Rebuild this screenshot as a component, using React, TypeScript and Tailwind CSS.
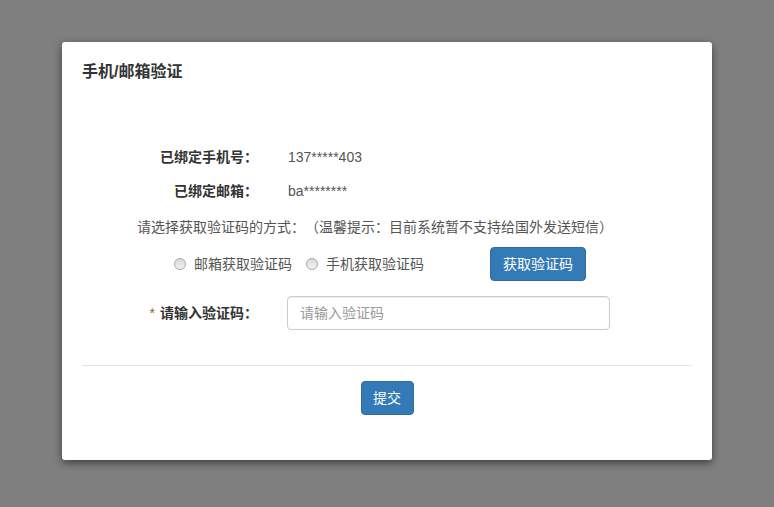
import React, { useState } from 'react';

const font = 'font-["Liberation_Sans","Noto_Sans_CJK_SC",sans-serif]';

const Radio = ({ checked, onClick, label }: { checked: boolean; onClick: () => void; label: string }) => (
    <label onClick={onClick} className="flex items-center gap-[8px] cursor-pointer text-[14px] leading-[20px] text-[#555]">
        <span className="w-[12px] h-[12px] rounded-full border border-[#a8a8a8] bg-gradient-to-b from-[#d8d8d8] to-[#f4f4f4] flex items-center justify-center">
            {checked && <span className="w-[5px] h-[5px] rounded-full bg-[#333]" />}
        </span>
        {label}
    </label>
);

export default function App() {
    const [mode, setMode] = useState<'email' | 'phone' | null>(null);
    const [code, setCode] = useState('');

    return (
        <div className={`w-full min-h-[507px] bg-[#7f7f7f] pt-[42px] [text-spacing-trim:space-all] ${font}`}>
            <div className="mx-auto w-[650px] h-[418px] bg-white rounded-[3px] shadow-[0_3px_9px_rgba(0,0,0,0.5)] flex flex-col">
                {/* Header */}
                <div className="px-[20px] pt-[20px]">
                    <h4 className="text-[16px] leading-[20px] font-bold text-[#333]">手机/邮箱验证</h4>
                </div>

                {/* Body */}
                <div className="px-[20px] pt-[65px] text-[14px] leading-[20px]">
                    <div className="flex items-center">
                        <div className="w-[176px] text-right font-bold text-[#333]">已绑定手机号：</div>
                        <div className="ml-[30px] text-[#555]">137*****403</div>
                    </div>
                    <div className="flex items-center mt-[14px]">
                        <div className="w-[176px] text-right font-bold text-[#333]">已绑定邮箱：</div>
                        <div className="ml-[30px] text-[#555]">ba********</div>
                    </div>
                    <div className="mt-[16px] pl-[55px] text-[#555]">
                        请选择获取验证码的方式：（温馨提示：目前系统暂不支持给国外发送短信）
                    </div>
                    <div className="mt-[10px] h-[34px] flex items-center">
                        <div className="ml-[92px] flex items-center gap-[14px]">
                            <Radio checked={mode === 'email'} onClick={() => setMode('email')} label="邮箱获取验证码" />
                            <Radio checked={mode === 'phone'} onClick={() => setMode('phone')} label="手机获取验证码" />
                        </div>
                        <button className="ml-[66px] w-[96px] h-[34px] rounded-[4px] bg-[#337ab7] border border-[#2e6da4] text-white text-[14px]">
                            获取验证码
                        </button>
                    </div>
                    <div className="mt-[15px] h-[34px] flex items-center">
                        <div className="w-[176px] text-right font-bold text-[#333]">
                            <span className="text-[#8a6d3b] font-normal mr-[5px]">*</span>
                            请输入验证码：
                        </div>
                        <input
                            value={code}
                            onChange={(e) => setCode(e.target.value)}
                            placeholder="请输入验证码"
                            className="ml-[29px] w-[323px] h-[34px] px-[12px] rounded-[4px] border border-[#ccc] text-[14px] text-[#555] placeholder:text-[#999] outline-none shadow-[inset_0_1px_1px_rgba(0,0,0,0.075)]"
                        />
                    </div>
                </div>

                {/* Divider */}
                <div className="mx-[20px] mt-[35px] border-t border-[#e5e5e5]" />

                {/* Footer */}
                <div className="flex justify-center pt-[15px]">
                    <button className="w-[53px] h-[34px] rounded-[4px] bg-[#337ab7] border border-[#2e6da4] text-white text-[14px]">
                        提交
                    </button>
                </div>
            </div>
        </div>
    );
}
